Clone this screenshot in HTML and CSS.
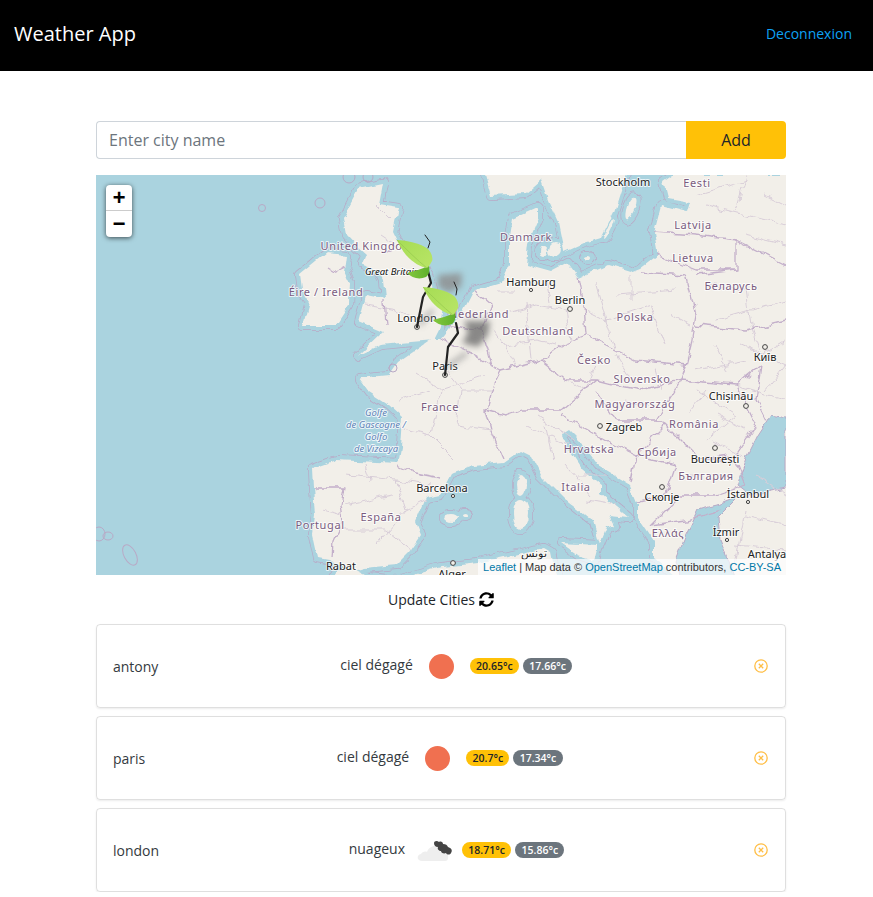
FILE: index.html
```html
<!DOCTYPE html>
<html>
    <head>
        <meta charset="utf-8">
        <title>Weather App</title>
        <link rel="stylesheet" href="styles.css">
    </head>
    <body>
        <nav class="navbar">
            <span class="brand">Weather App</span>
            <a class="logout" href="#">Deconnexion</a>
        </nav>
        <main class="content">
            <form class="city-form">
                <input class="city-input" type="text" placeholder="Enter city name">
                <button class="add-btn" type="button">Add</button>
            </form>

            <div class="map">
                <svg class="map-svg" viewBox="0 0 690 400" width="690" height="400">
                    <defs>
                        <filter id="rough" filterUnits="userSpaceOnUse" x="-20" y="-20" width="730" height="440" color-interpolation-filters="sRGB">
                            <feTurbulence type="fractalNoise" baseFrequency=".07" numOctaves="3" seed="4" result="n"/>
                            <feDisplacementMap in="SourceGraphic" in2="n" scale="7" xChannelSelector="R" yChannelSelector="G"/>
                        </filter>
                        <filter id="wiggle" filterUnits="userSpaceOnUse" x="-20" y="-20" width="730" height="440" color-interpolation-filters="sRGB">
                            <feTurbulence type="fractalNoise" baseFrequency=".09" numOctaves="2" seed="9" result="n"/>
                            <feDisplacementMap in="SourceGraphic" in2="n" scale="9" xChannelSelector="R" yChannelSelector="G"/>
                        </filter>
                        <linearGradient id="leaf-light" x1="0" y1="0" x2="1" y2="1">
                            <stop offset="0" stop-color="#a6dc55"/>
                            <stop offset="1" stop-color="#b9e566"/>
                        </linearGradient>
                        <linearGradient id="leaf-dark" x1="0" y1="0" x2="1" y2="0">
                            <stop offset="0" stop-color="#84c83f"/>
                            <stop offset="1" stop-color="#5fb02c"/>
                        </linearGradient>
                        <g id="land">
                            <!-- continent, clockwise from the dutch coast -->
                            <path d="M365 140L378 115L405 107L413 90L413 67L417 43L442 32L442 43L432 67L430 90L455 97L472 88L483 103L512 90L535 97L545 93L562 80L558 57L565 30L592 37L595 27L572 23L568 7L578 0L700 0L700 410L585 410L578 400L558 383L558 367L542 343L542 327L535 310L502 290L485 267L473 255L465 260L470 270L485 293L505 310L505 320L532 342L513 340L518 350L512 353L505 370L498 347L468 323L445 300L435 280L425 275L408 287L378 290L357 297L345 320L330 323L320 347L325 360L313 377L300 390L267 393L253 397L233 385L222 383L217 360L220 340L218 313L217 293L240 285L302 288L305 273L307 243L293 230L273 217L263 203L293 200L302 187L334 165L345 165Z"/>
                            <path d="M388-5L395 20L430 18L445 5L452 25L462 47L468 77L488 68L505 63L518 37L525 15L532-5Z"/>
                            <!-- great britain -->
                            <path d="M263 13L287 8L283 30L302 33L297 57L302 67L318 82L333 100L340 125L347 133L343 155L338 165L305 168L285 170L263 180L287 157L263 147L270 120L290 124L288 105L283 96L266 90L270 80L262 73L250 60L247 43Z"/>
                            <!-- ireland -->
                            <path d="M203 100L230 78L251 80L249 95L254 107L253 130L240 150L207 150L213 127L205 115Z"/>
                            <!-- islands -->
                            <ellipse cx="448" cy="76" rx="4" ry="5"/>
                            <ellipse cx="459" cy="75" rx="6" ry="7"/>
                            <ellipse cx="535" cy="33" rx="4" ry="12" transform="rotate(20 535 33)"/>
                            <ellipse cx="513" cy="53" rx="1.5" ry="11" transform="rotate(25 513 53)"/>
                            <ellipse cx="492" cy="83" rx="3" ry="2"/>
                            <ellipse cx="425" cy="310" rx="5" ry="10"/>
                            <ellipse cx="425" cy="339" rx="8" ry="15"/>
                            <ellipse cx="355" cy="343" rx="7" ry="4"/>
                            <ellipse cx="369" cy="340" rx="3" ry="2"/>
                            <path d="M465 368L502 370L498 385L482 380Z"/>
                            <ellipse cx="606" cy="350" rx="3" ry="5"/>
                            <ellipse cx="620" cy="372" rx="4" ry="3"/>
                            <ellipse cx="612" cy="388" rx="4" ry="2"/>
                            <ellipse cx="598" cy="372" rx="2" ry="2"/>
                            <!-- north africa -->
                            <path d="M232 410L240 397L258 395L272 402L300 405L345 392L382 388L425 378L448 373L455 377L458 392L465 410Z"/>
                        </g>
                        <g id="leaf">
                            <path class="leaf-back" d="M10 33C17 31 25 29 32 26C33 30 32 35 29 37C22 40 15 38 10 33Z"/>
                            <path class="leaf-front" d="M0 0C6 0 24 3 31 9C35 13 36 19 35 21C33 25 31 27 30 28C24 27 16 23 9 15C5 10 2 5 0 0Z"/>
                            <path class="leaf-vein" d="M0 0C10 10 20 20 30 28"/>
                        </g>
                    </defs>

                    <g class="coast" filter="url(#rough)">
                        <use href="#land" class="sea-line"/>
                        <use href="#land" class="sea-shallow"/>
                        <use href="#land" class="land"/>
                        <!-- inland seas laid over the continent -->
                        <path class="water" d="M690 243L675 240L662 260L652 280L642 310L655 320L690 313Z"/>
                        <path class="water" d="M585 405L580 385L590 360L602 335L622 330L642 322L622 342L624 365L632 385L640 405Z"/>
                    </g>

                    <g class="rings">
                        <circle cx="166" cy="33" r="3.5"/>
                        <circle cx="224" cy="28" r="5"/>
                        <circle cx="253" cy="2" r="6"/>
                        <circle cx="272" cy="2" r="5"/>
                        <circle cx="297" cy="193" r="4"/>
                        <ellipse cx="3" cy="359" rx="6" ry="7"/>
                        <ellipse cx="12" cy="361" rx="5" ry="4"/>
                        <ellipse cx="34" cy="380" rx="6" ry="11" transform="rotate(-28 34 380)"/>
                    </g>

                    <g class="regions" filter="url(#wiggle)">
                        <path d="M320 198L345 215L335 260L360 285M345 215L390 200M335 260L295 250M300 225L335 215M345 190L365 215L395 215M365 215L360 250L395 255"/>
                        <path d="M250 300L300 305L310 335L280 370M250 330L295 320M245 355L290 355L315 375M270 290L275 305M300 305L335 310M310 335L330 325"/>
                        <path d="M405 140L440 130L470 135M410 170L440 165L460 170M430 130L435 185M400 115L420 115M470 135L475 165M398 155L415 180L420 190M450 105L455 130"/>
                        <path d="M500 110L510 145L490 135M510 145L555 130M520 120L580 115M510 145L520 175M555 130L570 170M535 100L535 125M575 140L595 150"/>
                        <path d="M610 110L650 115L655 150M620 145L690 125M645 170L690 190L670 215M600 195L650 185M640 210L690 225M620 170L630 195M655 150L665 180L690 165"/>
                        <path d="M440 240L480 265M470 290L495 320M430 250L470 270M450 250L458 285M480 300L510 300M490 325L520 330"/>
                        <path d="M600 215L640 240L610 265M615 265L645 280M590 300L630 300M610 215L590 240M620 240L650 255M530 225L560 232"/>
                        <path d="M650 340L690 350M640 370L690 375M600 20L650 5M610 30L690 50M640 35L650 0M650 60L690 70M670 20L690 30M650 335L640 390M660 300L690 320"/>
                        <path d="M225 335L245 340M360 140L385 140M470 205L490 215L500 190M520 180L535 205M560 195L565 215"/>
                        <path d="M270 130L300 135L320 145M285 60L300 70M280 30L295 45"/>
                    </g>
                    <g class="borders" filter="url(#wiggle)">
                        <path d="M302 290L320 298L345 303"/>
                        <path d="M220 313L248 313L245 330L247 347L238 367L237 383"/>
                        <path d="M345 165L375 178L395 190L405 195L395 215L390 235L395 255L408 285"/>
                        <path d="M390 235L410 240L425 235L465 235L500 205L470 205L445 185L405 195"/>
                        <path d="M378 115L395 130L385 155L350 150"/>
                        <path d="M385 155L395 190"/>
                        <path d="M483 103L488 130L490 160L465 170L445 185"/>
                        <path d="M490 160L510 170L540 185L590 190L585 205L545 215L520 210L500 205"/>
                        <path d="M545 97L590 100L600 140L595 170L590 190"/>
                        <path d="M500 215L520 245L560 245L585 205L640 210L660 250L640 280L605 285L570 250L560 245"/>
                        <path d="M465 240L510 265L540 280L535 305"/>
                        <path d="M540 280L570 250M540 280L580 290L570 320L542 327M605 285L640 285L650 310L620 320L585 320L555 350M555 350L590 345L625 335"/>
                        <path d="M562 80L600 95L640 95M558 57L600 60L640 65L690 90M640 65L640 95L600 100"/>
                        <path d="M600 150L650 155L690 145M640 210L665 190L660 225L670 245"/>
                        <path d="M232 92L240 97L250 92"/>
                        <path d="M285 78L300 72M288 124L290 150"/>
                    </g>

                    <g class="city-dots">
                        <circle cx="321" cy="152" r="2.4"/>
                        <circle cx="349" cy="200" r="2.4"/>
                        <circle cx="435" cy="115" r="1.6"/>
                        <circle cx="474" cy="134" r="2.4"/>
                        <circle cx="669" cy="172" r="2.4"/>
                        <circle cx="504" cy="251" r="2.4"/>
                        <circle cx="650" cy="231" r="2.4"/>
                        <circle cx="619" cy="273" r="2.4"/>
                        <circle cx="566" cy="312" r="2.4"/>
                        <circle cx="652" cy="327" r="1.6"/>
                        <circle cx="631" cy="365" r="1.6"/>
                        <circle cx="357" cy="321" r="1.6"/>
                        <circle cx="357" cy="388" r="2.4"/>
                    </g>

                    <g class="label-country">
                        <text x="271" y="75">United Kingdom</text>
                        <text x="230" y="121">Éire / Ireland</text>
                        <text x="601" y="12">Eesti</text>
                        <text x="430" y="66">Danmark</text>
                        <text x="597" y="54">Latvija</text>
                        <text x="597" y="87">Lietuva</text>
                        <text x="635" y="115">Беларусь</text>
                        <text x="383" y="143">Nederland</text>
                        <text x="442" y="160">Deutschland</text>
                        <text x="539" y="146">Polska</text>
                        <text x="498" y="189">Česko</text>
                        <text x="546" y="208">Slovensko</text>
                        <text x="539" y="233">Magyarország</text>
                        <text x="598" y="253">România</text>
                        <text x="493" y="278">Hrvatska</text>
                        <text x="561" y="281">Србија</text>
                        <text x="610" y="305">България</text>
                        <text x="480" y="316">Italia</text>
                        <text x="572" y="362">Ελλάς</text>
                        <text x="224" y="354">Portugal</text>
                        <text x="285" y="346">España</text>
                        <text x="344" y="236">France</text>
                    </g>
                    <g class="label-city">
                        <text x="527" y="11">Stockholm</text>
                        <text x="435" y="111">Hamburg</text>
                        <text x="474" y="129">Berlin</text>
                        <text x="669" y="186">Київ</text>
                        <text x="635" y="225">Chișinău</text>
                        <text x="528" y="256">Zagreb</text>
                        <text x="619" y="288">București</text>
                        <text x="652" y="323">İstanbul</text>
                        <text x="566" y="326">Скопје</text>
                        <text x="630" y="361">İzmir</text>
                        <text x="671" y="383">Antalya</text>
                        <text x="346" y="317">Barcelona</text>
                        <text x="349" y="195">Paris</text>
                        <text x="321" y="147">London</text>
                        <text x="245" y="395">Rabat</text>
                        <text x="356" y="403">Alger</text>
                        <text x="438" y="382">تونس</text>
                    </g>
                    <text class="label-region" x="296" y="100">Great Britain</text>
                    <g class="label-sea">
                        <text x="280" y="241">Golfe</text>
                        <text x="280" y="253">de Gascogne /</text>
                        <text x="280" y="265">Golfo</text>
                        <text x="280" y="277">de Vizcaya</text>
                    </g>

                    <!-- weather markers: smoke first, then stems, then leaves -->
                    <g class="smoke">
                        <path class="smoke-light" d="M342 100L366 98L365 112L352 118L342 112Z"/>
                        <path d="M368 146L394 146L392 160L382 172L366 168L372 158Z"/>
                        <path class="smoke-tail" d="M323 150L337 135M351 192L371 178"/>
                    </g>
                    <g class="stems">
                        <path class="stem-thin" d="M329 60L334 67L332 73"/>
                        <path d="M331 92L335 108L327 122L321 152"/>
                        <path class="stem-thin" d="M358 107L361 114L360 120"/>
                        <path d="M360 148L362 158L352 172L349 200"/>
                    </g>
                    <use href="#leaf" transform="translate(301 65)"/>
                    <use href="#leaf" transform="translate(327 112)"/>
                </svg>

                <div class="zoom-control">
                    <a class="zoom-btn zoom-in" href="#">+</a>
                    <a class="zoom-btn" href="#">−</a>
                </div>
                <div class="attribution">
                    <a href="#">Leaflet</a> | Map data © <a href="#">OpenStreetMap</a> contributors, <a href="#">CC-BY-SA</a>
                </div>
            </div>

            <div class="update-row">
                <span>Update Cities</span>
                <svg class="refresh" viewBox="0 0 512 512" width="15" height="15">
                    <path d="M370.72 133.28C339.458 104.008 298.888 87.962 255.848 88c-77.458.068-144.328 53.178-162.791 126.85-1.344 5.363-6.122 9.15-11.651 9.15H24.103c-7.498 0-13.194-6.807-11.807-14.176C33.933 94.924 134.813 8 256 8c66.448 0 126.791 26.136 171.315 68.685L463.03 40.97C478.149 25.851 504 36.559 504 57.941V192c0 13.255-10.745 24-24 24H345.941c-21.382 0-32.09-25.851-16.971-40.971l41.75-41.749zM32 296h134.059c21.382 0 32.09 25.851 16.971 40.971l-41.75 41.75c31.262 29.273 71.835 45.319 114.876 45.28 77.418-.07 144.315-53.144 162.787-126.849 1.344-5.363 6.122-9.15 11.651-9.15h57.304c7.498 0 13.194 6.807 11.807 14.176C478.067 417.076 377.187 504 256 504c-66.448 0-126.791-26.136-171.315-68.685L48.97 471.03C33.851 486.149 8 475.441 8 454.059V320c0-13.255 10.745-24 24-24z"/>
                </svg>
            </div>

            <div class="city-list">
                <div class="city-card">
                    <span class="city-name">antony</span>
                    <div class="city-weather">
                        <span class="weather-desc">ciel dégagé</span>
                        <div class="weather-icon"><span class="sun"></span></div>
                        <span class="badge badge-max">20.65°c</span>
                        <span class="badge badge-min">17.66°c</span>
                    </div>
                    <svg class="remove" viewBox="0 0 14 14" width="14" height="14"><circle cx="7" cy="7" r="6.2"/><path d="M4.8 4.8L9.2 9.2M9.2 4.8L4.8 9.2"/></svg>
                </div>
                <div class="city-card">
                    <span class="city-name">paris</span>
                    <div class="city-weather">
                        <span class="weather-desc">ciel dégagé</span>
                        <div class="weather-icon"><span class="sun"></span></div>
                        <span class="badge badge-max">20.7°c</span>
                        <span class="badge badge-min">17.34°c</span>
                    </div>
                    <svg class="remove" viewBox="0 0 14 14" width="14" height="14"><circle cx="7" cy="7" r="6.2"/><path d="M4.8 4.8L9.2 9.2M9.2 4.8L4.8 9.2"/></svg>
                </div>
                <div class="city-card">
                    <span class="city-name">london</span>
                    <div class="city-weather">
                        <span class="weather-desc">nuageux</span>
                        <div class="weather-icon">
                            <svg viewBox="0 0 50 50" width="50" height="50">
                                <path class="cloud-light" d="M13 36C8 36 7 30 12 29C13 27 16 26 18 27C20 21 28 18 32 25C38 26 40 31 39 33C39 35 38 36 36 36Z"/>
                                <path class="cloud-dark" d="M25 18C25 16 28 15 30 17C32 16 34 17 34 19C37 19 38 20 39 22C42 23 44 25 42 28C41 30 38 30 37 28C35 29 32 28 32 26C30 26 28 24 29 22C26 22 25 20 25 18Z"/>
                            </svg>
                        </div>
                        <span class="badge badge-max">18.71°c</span>
                        <span class="badge badge-min">15.86°c</span>
                    </div>
                    <svg class="remove" viewBox="0 0 14 14" width="14" height="14"><circle cx="7" cy="7" r="6.2"/><path d="M4.8 4.8L9.2 9.2M9.2 4.8L4.8 9.2"/></svg>
                </div>
            </div>
        </main>
    </body>
</html>
```
FILE: styles.css
```css
body {
    margin: 0;
    background: #fff;
    color: #212529;
    font-family: "Open Sans", "Noto Sans", sans-serif;
    font-size: 14px;
    line-height: 1.5;
}

.navbar {
    display: flex;
    align-items: center;
    justify-content: space-between;
    height: 71px;
    padding: 0 21px 4px 14px;
    box-sizing: border-box;
    background: #000;
}
.brand {
    color: #fff;
    font-size: 20px;
}
.logout {
    color: #0ea2f5;
    text-decoration: none;
}

.content {
    width: 690px;
    margin-left: 96px;
    padding-top: 50px;
}

.city-form {
    display: flex;
    height: 38px;
    margin-bottom: 16px;
}
.city-input {
    flex: 1;
    min-width: 0;
    padding: 6px 12px;
    border: 1px solid #ced4da;
    border-right: 0;
    border-radius: 4px 0 0 4px;
    font: 16px "Open Sans", sans-serif;
    color: #495057;
    outline: none;
}
.city-input::placeholder {
    color: #6c757d;
    opacity: 1;
}
.add-btn {
    width: 100px;
    border: 0;
    border-radius: 0 4px 4px 0;
    background: #ffc107;
    color: #212529;
    font: 16px "Open Sans", sans-serif;
}

.map {
    position: relative;
    height: 400px;
    overflow: hidden;
    background: #aad3df;
}
.map-svg {
    display: block;
}

.land { fill: #f2efe9; }
.water { fill: #aad3df; stroke: #b9a9c6; stroke-width: 1; }
.sea-line { fill: #b9a9c6; stroke: #b9a9c6; stroke-width: 10; stroke-linejoin: round; }
.sea-shallow { fill: #aad3df; stroke: #aad3df; stroke-width: 8.6; stroke-linejoin: round; }

.rings circle,
.rings ellipse {
    fill: none;
    stroke: #b9a9c6;
    stroke-width: 1;
}

.borders path {
    fill: none;
    stroke: #c3afca;
    stroke-width: 1.3;
    stroke-linejoin: round;
}
.regions path {
    fill: none;
    stroke: #d8cdd8;
    stroke-width: 1;
}

.city-dots circle {
    fill: #f2efe9;
    stroke: #444;
    stroke-width: 1;
}

.map-svg text {
    text-anchor: middle;
    font-family: "Noto Sans", sans-serif;
    paint-order: stroke;
    stroke: rgba(255, 255, 255, .75);
    stroke-width: 2px;
    stroke-linejoin: round;
}
.label-country text {
    fill: #7a5c80;
    font-size: 11px;
    letter-spacing: .6px;
}
.label-city text {
    fill: #222;
    font-size: 11px;
}
.map-svg .label-region {
    fill: #111;
    font-size: 9.5px;
    font-style: italic;
}
.label-sea text {
    fill: #5f84b8;
    font-size: 9.5px;
    font-style: italic;
}

.smoke {
    fill: #6f6f6f;
    opacity: .8;
    filter: blur(3px);
}
.smoke .smoke-light {
    fill: #8d8d8d;
}
.smoke .smoke-tail {
    fill: none;
    stroke: #999;
    stroke-width: 4;
}
.stems path {
    fill: none;
    stroke: #222;
    stroke-width: 2.2;
    stroke-linecap: round;
    stroke-linejoin: round;
}
.stems .stem-thin {
    stroke-width: 1;
}
.leaf-front { fill: url(#leaf-light); }
.leaf-back { fill: url(#leaf-dark); }
.leaf-vein { fill: none; stroke: #95c84e; stroke-width: .7; }

.zoom-control {
    position: absolute;
    top: 10px;
    left: 10px;
    width: 26px;
    border-radius: 4px;
    background: #fff;
    box-shadow: 0 1px 5px rgba(0, 0, 0, .65);
}
.zoom-btn {
    display: block;
    box-sizing: border-box;
    height: 26px;
    padding-top: 4px;
    color: #000;
    font: bold 22px/22px "Liberation Mono", monospace;
    text-align: center;
    text-decoration: none;
}
.zoom-in {
    border-bottom: 1px solid #ccc;
}

.attribution {
    position: absolute;
    right: 0;
    bottom: 0;
    padding: 0 5px;
    background: rgba(255, 255, 255, .7);
    color: #333;
    font: 11px/16px "Liberation Sans", sans-serif;
}
.attribution a {
    color: #0078a8;
    text-decoration: none;
}

.update-row {
    display: flex;
    align-items: center;
    justify-content: center;
    gap: 4px;
    height: 49px;
}

.city-list {
    display: flex;
    flex-direction: column;
    gap: 8px;
}
.city-card {
    display: flex;
    align-items: center;
    justify-content: space-between;
    height: 84px;
    padding: 0 17px 0 16px;
    box-sizing: border-box;
    border: 1px solid rgba(0, 0, 0, .125);
    border-radius: 4px;
    box-shadow: 0 1px 2px rgba(0, 0, 0, .08);
    color: #343a40;
}
.city-weather {
    display: flex;
    align-items: center;
}
.weather-desc {
    margin-top: -3px;
}
.weather-icon {
    display: flex;
    align-items: center;
    justify-content: center;
    width: 50px;
    height: 50px;
    margin: 0 3.5px;
}
.sun {
    width: 25px;
    height: 25px;
    border-radius: 50%;
    background: #f07050;
}
.cloud-light { fill: #eeeeee; }
.cloud-dark { fill: #444; }

.badge {
    padding: 2.6px 6.3px;
    border-radius: 10px;
    font-size: 10.5px;
    font-weight: 600;
    line-height: 10.5px;
}
.badge-max {
    background: #ffc107;
    color: #212529;
}
.badge-min {
    margin-left: 4px;
    background: #6c757d;
    color: #fff;
}

.remove {
    flex: none;
}
.remove circle,
.remove path {
    fill: none;
    stroke: #ffbe45;
    stroke-width: 1.3;
}
```
